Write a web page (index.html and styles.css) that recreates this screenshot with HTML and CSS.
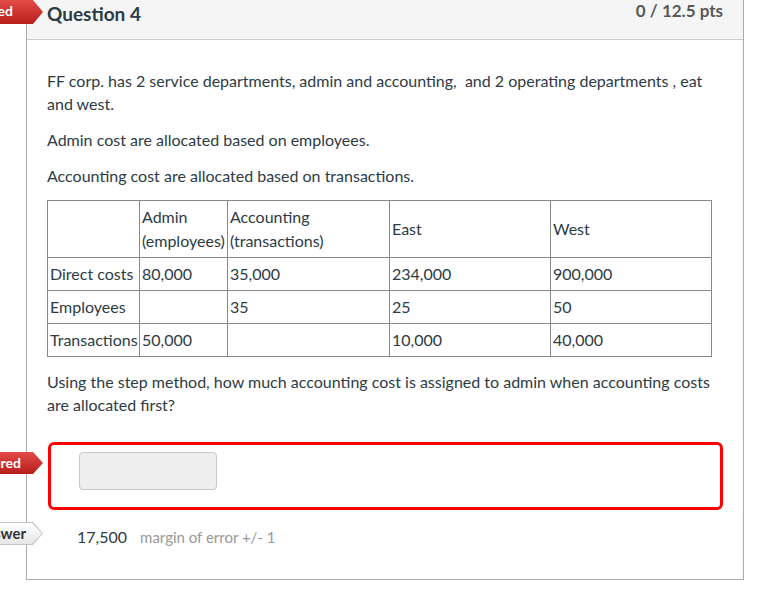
FILE: index.html
```html
<!DOCTYPE html>
<html lang="en">
<head>
<meta charset="utf-8">
<title>Question 4</title>
<link rel="stylesheet" href="styles.css">
</head>
<body>
<div class="page">
  <div class="question">
    <div class="tab tab-red tab-top"><span class="tab-text">Unanswered</span></div>
    <div class="q-header">
      <div class="q-title">Question 4</div>
      <div class="q-pts">0 / 12.5 pts</div>
    </div>
    <div class="q-content">
      <p>FF corp. has 2 service departments, admin and accounting,&nbsp; and 2 operating departments , eat and west.</p>
      <p>Admin cost are allocated based on employees.</p>
      <p>Accounting cost are allocated based on transactions.</p>
      <table class="data">
        <colgroup>
          <col class="c1"><col class="c2"><col class="c3"><col class="c4"><col class="c5">
        </colgroup>
        <tr class="head-row">
          <td></td>
          <td>Admin<br>(employees)</td>
          <td>Accounting<br>(transactions)</td>
          <td>East</td>
          <td>West</td>
        </tr>
        <tr>
          <td>Direct costs</td><td>80,000</td><td>35,000</td><td>234,000</td><td>900,000</td>
        </tr>
        <tr>
          <td>Employees</td><td></td><td>35</td><td>25</td><td>50</td>
        </tr>
        <tr>
          <td>Transactions</td><td>50,000</td><td></td><td>10,000</td><td>40,000</td>
        </tr>
      </table>
      <p>Using the step method, how much accounting cost is assigned to admin when accounting costs are allocated first?</p>
      <div class="answer-wrong">
        <div class="tab tab-red tab-mid"><span class="tab-text">Unanswered</span></div>
        <div class="answer-input"></div>
      </div>
      <div class="answer-correct">
        <div class="tab tab-gray tab-low"><span class="tab-text">Correct Answer</span></div>
        <span class="answer-value">17,500</span>
        <span class="answer-margin">margin of error +/- 1</span>
      </div>
    </div>
  </div>
</div>
</body>
</html>
```
FILE: styles.css
```css
* { box-sizing: border-box; }

body {
  margin: 0;
  font-family: Lato, "Open Sans", "Liberation Sans", sans-serif;
  color: #2d3b45;
  background: #ffffff;
}

.page {
  padding-left: 26px;
}

.question {
  position: relative;
  width: 718px;
  border: 1px solid #aaaaaa;
  border-top: none;
}

.q-header {
  height: 40px;
  background: #f5f5f5;
  border-bottom: 1px solid #c7cdd1;
  display: flex;
  justify-content: space-between;
  align-items: flex-start;
  padding: 0 20px;
}

.q-title {
  font-size: 19px;
  font-weight: 700;
  line-height: 24px;
  padding-top: 2px;
  color: #2d3b45;
}

.q-pts {
  font-size: 17px;
  font-weight: 700;
  line-height: 20px;
  padding-top: 1px;
  color: #595959;
}

.q-content {
  padding: 29px 20px 30px;
  font-size: 16px;
}

.q-content p {
  margin: 0 0 13px;
  line-height: 23px;
}

.data {
  border-collapse: collapse;
  table-layout: fixed;
  width: 664px;
  margin: 0 0 13px;
}

.data .c1 { width: 92px; }
.data .c2 { width: 88px; }
.data .c3 { width: 162px; }
.data .c4 { width: 161px; }
.data .c5 { width: 161px; }

.data td {
  border: 1px solid #888888;
  padding: 4px 2px;
  line-height: 24px;
  vertical-align: middle;
  text-align: left;
  white-space: nowrap;
}

/* tabs */
.tab {
  position: absolute;
  width: 130px;
  font-size: 14px;
  font-weight: 700;
  text-align: right;
  white-space: nowrap;
  clip-path: polygon(0 0, calc(100% - 10px) 0, 100% 50%, calc(100% - 10px) 100%, 0 100%);
}

.tab-text {
  position: relative;
  display: block;
}

.tab-red {
  background: linear-gradient(to bottom, #e34b49, #b61e1c);
  color: #ffffff;
}

.tab-gray {
  background: #c4c4c4;
  color: #333333;
  font-size: 15px;
}

.tab-gray::before {
  content: "";
  position: absolute;
  top: 1px;
  left: 0;
  right: 1px;
  bottom: 1px;
  background: linear-gradient(to bottom, #ffffff, #e6e6e6);
  clip-path: polygon(0 0, calc(100% - 10px) 0, 100% 50%, calc(100% - 10px) 100%, 0 100%);
}

.tab-top {
  top: 0;
  left: -114px;
  height: 24px;
  line-height: 22px;
  padding-right: 30px;
}

.tab-mid {
  top: 10px;
  left: -134px;
  height: 22px;
  line-height: 21px;
  padding-right: 22px;
}

.tab-low {
  top: -3px;
  left: -134px;
  height: 23px;
  line-height: 22px;
  padding-right: 17px;
}

.answer-wrong {
  position: relative;
  margin: 26px 0 0 1px;
  height: 68px;
  border: 3px solid #ff0000;
  border-radius: 6px;
  padding: 7px 0 17px 28px;
}

.answer-wrong .tab {
  left: -138px;
  top: 7px;
}

.answer-input {
  width: 138px;
  height: 38px;
  background: #eeeeee;
  border: 1px solid #c8c8c8;
  border-radius: 4px;
}

.answer-correct {
  position: relative;
  margin-top: 15px;
  padding-left: 30px;
  line-height: 23px;
  display: flex;
  align-items: baseline;
  gap: 13px;
}

.answer-value {
  font-size: 16px;
  color: #2d3b45;
}

.answer-margin {
  font-size: 15px;
  color: #999999;
}
```
